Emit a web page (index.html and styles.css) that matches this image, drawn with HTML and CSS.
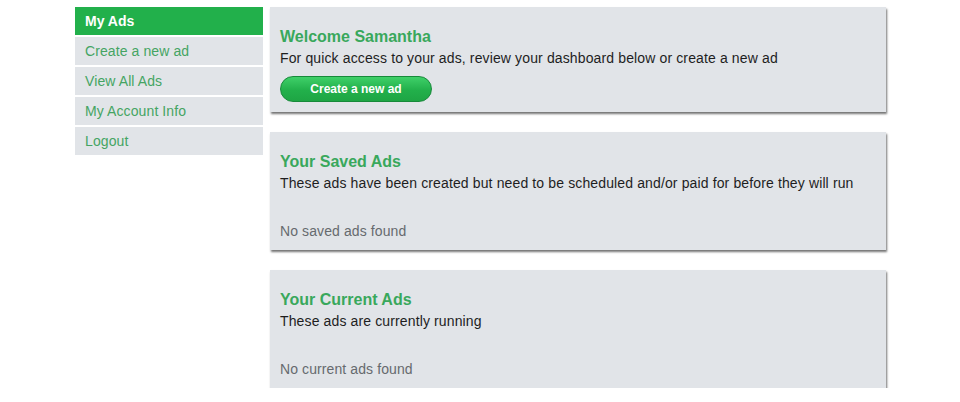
FILE: index.html
```html
<!DOCTYPE html>
<html>
<head>
<meta charset="utf-8">
<link rel="stylesheet" href="styles.css">
</head>
<body>
<div class="page">
  <nav class="sidebar">
    <div class="nav-title">My Ads</div>
    <a class="nav-item" href="#">Create a new ad</a>
    <a class="nav-item" href="#">View All Ads</a>
    <a class="nav-item" href="#">My Account Info</a>
    <a class="nav-item" href="#">Logout</a>
  </nav>
  <main class="main">
    <section class="panel">
      <h2 class="panel-title">Welcome Samantha</h2>
      <p class="panel-desc">For quick access to your ads, review your dashboard below or create a new ad</p>
      <a class="btn" href="#">Create a new ad</a>
    </section>
    <section class="panel panel-list">
      <h2 class="panel-title">Your Saved Ads</h2>
      <p class="panel-desc">These ads have been created but need to be scheduled and/or paid for before they will run</p>
      <p class="panel-empty">No saved ads found</p>
    </section>
    <section class="panel panel-list">
      <h2 class="panel-title">Your Current Ads</h2>
      <p class="panel-desc">These ads are currently running</p>
      <p class="panel-empty">No current ads found</p>
    </section>
  </main>
</div>
</body>
</html>
```
FILE: styles.css
```css
html, body {
  margin: 0;
  padding: 0;
  background: #ffffff;
  font-family: "Liberation Sans", Arial, sans-serif;
}
.page {
  display: flex;
  align-items: flex-start;
  gap: 7px;
  padding: 7px 0 0 75px;
}
.sidebar {
  width: 188px;
  display: flex;
  flex-direction: column;
  gap: 2px;
}
.nav-title {
  background: #22b04b;
  color: #ffffff;
  font-weight: bold;
  font-size: 14px;
  height: 28px;
  line-height: 28px;
  padding: 0 10px;
}
.nav-item {
  display: block;
  background: #e1e4e8;
  color: #45a463;
  font-size: 14px;
  height: 28px;
  line-height: 28px;
  padding: 0 10px;
  text-decoration: none;
  letter-spacing: 0.1px;
}
.main {
  width: 616px;
  display: flex;
  flex-direction: column;
  gap: 20px;
}
.panel {
  background: #e1e4e8;
  padding: 20px 10px 10px;
  box-shadow: 1px 2px 2px rgba(0, 0, 0, 0.55);
}
.panel-list {
  padding-bottom: 11px;
}
.panel-title {
  margin: 0;
  color: #39a85c;
  font-size: 16px;
  font-weight: bold;
  line-height: 19px;
}
.panel-desc {
  margin: 4px 0 0;
  color: #1e1e1e;
  font-size: 14px;
  line-height: 16px;
  letter-spacing: 0.13px;
}
.panel-empty {
  margin: 32px 0 0;
  color: #666a6e;
  font-size: 14px;
  line-height: 16px;
  letter-spacing: 0.1px;
}
.btn {
  display: inline-block;
  margin-top: 10px;
  width: 150px;
  height: 24px;
  line-height: 24px;
  text-align: center;
  color: #ffffff;
  font-size: 12px;
  font-weight: bold;
  text-decoration: none;
  border: 1px solid #178a3a;
  border-radius: 13px;
  background: linear-gradient(#3fd069, #22b04b 55%, #1ea544);
}
```
